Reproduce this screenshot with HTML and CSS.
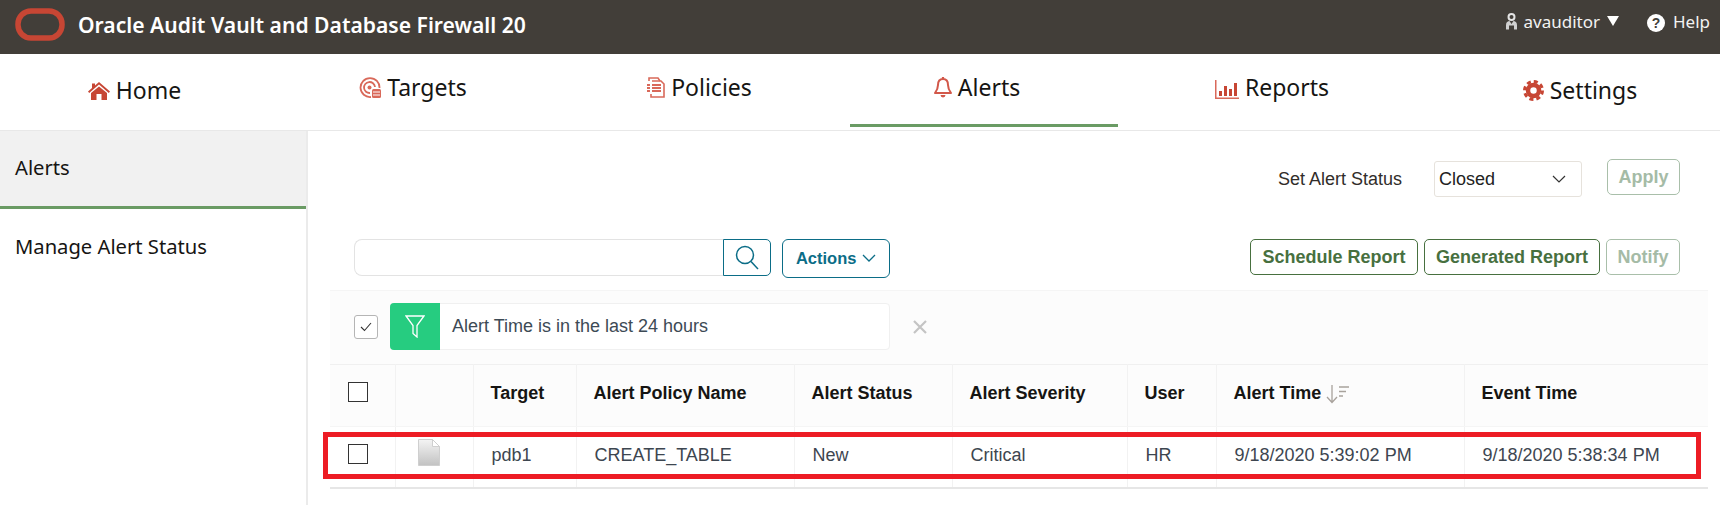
FILE: index.html
```html
<!DOCTYPE html>
<html lang="en">
<head>
  <meta charset="UTF-8">
  <title>Alerts - Oracle Audit Vault and Database Firewall</title>
  <link rel="stylesheet" href="styles.css">
</head>
<body>

  <header class="topbar">
    <svg class="logo" width="50" height="33" viewBox="0 0 50 33">
      <rect x="3" y="3" width="44" height="27" rx="13" fill="none" stroke="#c74634" stroke-width="5.5"/>
    </svg>
    <div class="product">Oracle Audit Vault and Database Firewall 20</div>
    <div class="user">
      <svg width="13" height="17" viewBox="0 0 13 17">
        <circle cx="6.5" cy="4" r="3" fill="none" stroke="#e4e4e4" stroke-width="2"/>
        <path d="M1 16.500v-4.500c0-3 2-4 3.500-4l2 3 2-3c1.500 0 3.500 1 3.500 4v4.500h-3v-4h-5v4z" fill="#d0d0d0"/>
      </svg>
      <span>avauditor</span>
      <span class="caret"></span>
    </div>
    <div class="help">
      <span class="help-icon">?</span>
      <span>Help</span>
    </div>
  </header>

  <nav class="tabs">
    <a class="tab tab-home low">
      <svg width="22" height="18" viewBox="0 0 22 18" fill="#c74634">
        <path d="M11 0 L22 9.5 L20.8 11 L11 2.6 L1.2 11 L0 9.5 L4 6 V1.5 H7 V3.4z"/>
        <path d="M11 4.4 L19 11 V18 H13.5 V12 H8.5 V18 H3 V11z"/>
      </svg>
      Home
    </a>
    <a class="tab tab-targets">
      <svg width="22" height="21" viewBox="0 0 22 21" fill="none" stroke="#d9695a" stroke-width="1.8">
        <path d="M12 20a9.5 9.5 0 1 1 8.5-9"/>
        <path d="M11 16a5.5 5.5 0 1 1 5-6"/>
        <circle cx="10.5" cy="10.5" r="2" fill="#d9695a" stroke="none"/>
        <rect x="13" y="12" width="9" height="9" rx="1.5" fill="#d9695a" stroke="none"/>
        <path d="M14 15h7M14 18h7" stroke="#fff" stroke-width="1"/>
      </svg>
      Targets
    </a>
    <a class="tab tab-policies">
      <svg width="18" height="21" viewBox="0 0 18 21" fill="none" stroke="#d9695a" stroke-width="1.6">
        <path d="M2 4V1h9l2 3"/>
        <path d="M5 4h9l3 3v13H4v-3"/>
        <path d="M0 8h3M0 11h3M0 14h3M5 8h9M5 11h9M5 14h9" stroke-width="1.8"/>
      </svg>
      Policies
    </a>
    <a class="tab tab-alerts active">
      <svg width="18" height="21" viewBox="0 0 18 21" fill="none" stroke="#d2584a" stroke-width="2">
        <path d="M9 2c-3.5 0-5 2.6-5 6 0 4-1.5 6-3 8h16c-1.5-2-3-4-3-8 0-3.400-1.500-6-5-6z" stroke-linejoin="round"/>
        <path d="M9 0v2" stroke-width="2.2"/>
        <path d="M6.5 18a2.5 2.5 0 0 0 5 0z" fill="#d2584a" stroke="none"/>
      </svg>
      Alerts
    </a>
    <a class="tab tab-reports">
      <svg width="24" height="19" viewBox="0 0 24 19" fill="#c74634">
        <path d="M0 0h1.5v17.5H24V19H0z" fill="#d9695a"/>
        <rect x="4" y="11" width="3" height="5"/>
        <rect x="9" y="6" width="3" height="10"/>
        <rect x="14" y="9" width="3" height="7"/>
        <rect x="19" y="3" width="3" height="13"/>
      </svg>
      Reports
    </a>
    <a class="tab tab-settings low">
      <svg width="21" height="21" viewBox="0 0 21 21">
        <circle cx="10.5" cy="10.5" r="5.5" fill="none" stroke="#c74634" stroke-width="4.5"/>
        <circle cx="10.5" cy="10.5" r="9" fill="none" stroke="#c74634" stroke-width="3" stroke-dasharray="4.07 3"/>
      </svg>
      Settings
    </a>
  </nav>

  <div class="layout">
    <aside class="sidebar">
      <a class="side-item active">Alerts</a>
      <a class="side-item">Manage Alert Status</a>
    </aside>

    <main class="content">
      <div class="status-row">
        <label class="status-label">Set Alert Status</label>
        <div class="select">
          Closed
          <svg width="14" height="8" viewBox="0 0 14 8" fill="none" stroke="#333" stroke-width="1.2">
            <path d="M1 1l6 6 6-6"/>
          </svg>
        </div>
        <button class="btn btn-disabled btn-apply">Apply</button>
      </div>

      <div class="toolbar">
        <input class="search-input" type="text">
        <button class="search-btn">
          <svg width="24" height="25" viewBox="0 0 24 25" fill="none" stroke="#0b6d87" stroke-width="1.5">
            <circle cx="10" cy="10" r="8.5"/>
            <path d="M16 16.5l7 7.5"/>
          </svg>
        </button>
        <button class="actions-btn">
          Actions
          <svg width="14" height="8" viewBox="0 0 14 8" fill="none" stroke="#0b6d87" stroke-width="1.3">
            <path d="M1 1l6 6 6-6"/>
          </svg>
        </button>
        <div class="toolbar-right">
          <button class="btn btn-schedule">Schedule Report</button>
          <button class="btn btn-generated">Generated Report</button>
          <button class="btn btn-disabled btn-notify">Notify</button>
        </div>
      </div>

      <div class="report">
        <div class="filters">
          <span class="filter-check">
            <svg width="12" height="10" viewBox="0 0 12 10" fill="none" stroke="#333" stroke-width="1.1">
              <path d="M1 5l3.5 3.5L11 1"/>
            </svg>
          </span>
          <div class="filter-chip">
            <span class="filter-icon">
              <svg width="20" height="23" viewBox="0 0 20 23" fill="none" stroke="#fff" stroke-width="1.3">
                <path d="M1 1h18l-7 9.5V22l-4-3.5v-8z"/>
              </svg>
            </span>
            <span class="filter-text">Alert Time is in the last 24 hours</span>
          </div>
          <svg class="filter-remove" width="14" height="14" viewBox="0 0 14 14" stroke="#c4c4c4" stroke-width="2.2">
            <path d="M1 1l12 12M13 1L1 13"/>
          </svg>
        </div>

        <table class="alerts-table">
          <colgroup>
            <col class="c-check">
            <col class="c-icon">
            <col class="c-target">
            <col class="c-policy">
            <col class="c-status">
            <col class="c-severity">
            <col class="c-user">
            <col class="c-alert-time">
            <col class="c-event-time">
          </colgroup>
          <thead>
            <tr>
              <th><span class="box"></span></th>
              <th></th>
              <th>Target</th>
              <th>Alert Policy Name</th>
              <th>Alert Status</th>
              <th>Alert Severity</th>
              <th>User</th>
              <th>
                Alert Time
                <svg class="sort" width="24" height="20" viewBox="0 0 24 20" fill="none" stroke="#a8a29c" stroke-width="1.3">
                  <path d="M6 1v17M1 13l5 5.5 5-5.5"/>
                  <path d="M13 3h10M13 7.5h7M13 12h4"/>
                </svg>
              </th>
              <th>Event Time</th>
            </tr>
          </thead>
          <tbody>
            <tr>
              <td><span class="box"></span></td>
              <td>
                <svg class="file" width="22" height="27" viewBox="0 0 22 27">
                  <defs>
                    <linearGradient id="fileFill" x1="0" y1="0" x2="0" y2="1">
                      <stop offset="0" stop-color="#f4f4f4"/>
                      <stop offset="1" stop-color="#c2c2c2"/>
                    </linearGradient>
                  </defs>
                  <path d="M.5.5h14l7 7v19H.5z" fill="url(#fileFill)" stroke="#cfcfcf"/>
                  <path d="M14.5.5v7h7z" fill="#fff" stroke="#cfcfcf"/>
                </svg>
              </td>
              <td>pdb1</td>
              <td>CREATE_TABLE</td>
              <td>New</td>
              <td>Critical</td>
              <td>HR</td>
              <td>9/18/2020 5:39:02 PM</td>
              <td>9/18/2020 5:38:34 PM</td>
            </tr>
          </tbody>
        </table>
        <div class="row-highlight"></div>
      </div>
    </main>
  </div>

</body>
</html>
```

FILE: styles.css
```css
* {
  box-sizing: border-box;
}

body {
  margin: 0;
  min-height: 100vh;
  display: flex;
  flex-direction: column;
  background: white;
  font-family: "Liberation Sans", Arial, sans-serif;
  color: #161513;
  overflow: hidden;
}

/* top bar */
.topbar {
  height: 54px;
  background: #423e39;
  color: white;
  display: flex;
  align-items: flex-start;
  font-family: "Noto Sans", sans-serif;
}

.logo {
  margin: 8px 0 0 15px;
}

.product {
  margin: 11px 0 0 13px;
  font-size: 21.1px;
  line-height: 28px;
  font-weight: 600;
}

.user {
  margin: 9px 0 0 auto;
  display: flex;
  align-items: center;
  height: 24px;
  font-size: 17px;
  gap: 5px;
  color: #f2f2f2;
}

.caret {
  margin-left: 2px;
  border-left: 6.5px solid transparent;
  border-right: 6.5px solid transparent;
  border-top: 10px solid white;
}

.help {
  margin: 9px 10px 0 28px;
  display: flex;
  align-items: center;
  height: 24px;
  font-size: 17px;
  gap: 8px;
  color: #f2f2f2;
}

.help-icon {
  width: 18px;
  height: 18px;
  margin-top: 3px;
  border-radius: 50%;
  background: white;
  color: #423e39;
  font: bold 14px/18px "Liberation Sans", sans-serif;
  text-align: center;
}

/* main nav */
.tabs {
  height: 77px;
  display: grid;
  grid-template-columns: 269px 288px 285px 8px 268px 308px 294px;
  border-bottom: 1px solid #e8e8e8;
  font-family: "Noto Sans", sans-serif;
  font-size: 23px;
}

.tab {
  display: flex;
  justify-content: center;
  align-items: flex-start;
  gap: 6px;
  padding-top: 18px;
  height: 73px;
  line-height: 31px;
  white-space: nowrap;
}

.tab svg {
  margin-top: 5px;
}

.tab.low {
  padding-top: 21px;
}

.tab-home svg {
  margin-top: 7px;
}

.tab-alerts {
  grid-column: 5;
  padding-right: 14px;
  border-bottom: 3px solid #6a9b64;
}

.tab-reports svg {
  margin-top: 8px;
}

.tab-settings {
  padding-left: 14px;
}

/* page body */
.layout {
  flex: 1;
  display: flex;
}

.sidebar {
  width: 308px;
  flex-shrink: 0;
  border-right: 2px solid #ebebeb;
  font-family: "Noto Sans", sans-serif;
  font-size: 20.2px;
}

.side-item {
  display: block;
  padding: 0 15px;
  height: 78px;
  line-height: 72px;
}

.side-item.active {
  background: #f1f1f1;
  border-bottom: 3px solid #6a9b64;
}

.side-item + .side-item {
  height: 76px;
  line-height: 74px;
}

.content {
  flex: 1;
  padding-top: 28px;
  min-width: 0;
}

.status-row {
  display: flex;
  justify-content: flex-end;
  align-items: flex-start;
  padding-right: 40px;
  height: 80px;
}

.status-label {
  margin: 10px 32px 0 0;
  font-size: 18px;
  line-height: 20px;
  color: #312d2a;
}

.select {
  width: 148px;
  height: 36px;
  margin: 2px 25px 0 0;
  padding: 0 15px 0 4px;
  display: flex;
  justify-content: space-between;
  align-items: center;
  border: 1px solid #e6e2dc;
  border-radius: 3px;
  font-size: 18px;
  color: #222;
}

.btn {
  height: 36px;
  background: white;
  border: 1px solid #47703f;
  border-radius: 5px;
  padding: 0;
  color: #47703f;
  font: bold 18px "Liberation Sans", Arial, sans-serif;
  white-space: nowrap;
}

.btn-disabled {
  border-color: #a9bfaa;
  color: #a5bba6;
}

.btn-apply {
  width: 73px;
}

.btn-schedule {
  width: 168px;
}

.btn-generated {
  width: 176px;
}

.btn-notify {
  width: 74px;
}

.toolbar {
  display: flex;
  align-items: flex-start;
  height: 51px;
  padding: 0 40px 0 46px;
}

.search-input {
  width: 369px;
  height: 37px;
  border: 1px solid #e3e3e3;
  border-right: none;
  border-radius: 8px 0 0 8px;
}

.search-btn {
  width: 48px;
  height: 37px;
  padding: 3px 0 0;
  background: white;
  border: 1px solid #0b6d87;
  border-radius: 0 5px 5px 0;
}

.actions-btn {
  width: 108px;
  height: 39px;
  margin-left: 11px;
  padding: 0;
  background: white;
  border: 1px solid #0b6d87;
  border-radius: 6px;
  color: #0b6d87;
  font: bold 16.5px "Liberation Sans", Arial, sans-serif;
}

.actions-btn svg {
  margin-left: 1px;
  vertical-align: 2px;
}

.toolbar-right {
  margin-left: auto;
  display: flex;
  gap: 6px;
}

/* report region */
.report {
  position: relative;
  margin: 0 12px 0 22px;
  border-bottom: 2px solid #e6e6e6;
}

.filters {
  height: 74px;
  padding: 12px 0 0 24px;
  display: flex;
  align-items: flex-start;
  background: #fcfcfc;
  border-top: 1px solid #f5f5f5;
}

.filter-check {
  width: 24px;
  height: 24px;
  margin: 12px 12px 0 0;
  display: flex;
  justify-content: center;
  align-items: center;
  background: white;
  border: 1px solid #b5b5b5;
  border-radius: 3px;
}

.filter-chip {
  width: 500px;
  height: 47px;
  display: flex;
  align-items: center;
  background: white;
  border: 1px solid #f0f0f0;
  border-radius: 4px;
}

.filter-icon {
  width: 50px;
  height: 47px;
  margin: -1px 0 -1px -1px;
  display: flex;
  justify-content: center;
  align-items: center;
  background: #26cc80;
  border-radius: 4px 0 0 4px;
}

.filter-text {
  margin-left: 12px;
  font-size: 18px;
  color: #3d4a55;
}

.filter-remove {
  margin: 17px 0 0 23px;
}

.alerts-table {
  width: 1378px;
  table-layout: fixed;
  border-collapse: collapse;
}

.c-check { width: 65px; }
.c-icon { width: 78px; }
.c-target { width: 103px; }
.c-policy { width: 218px; }
.c-status { width: 158px; }
.c-severity { width: 175px; }
.c-user { width: 89px; }
.c-alert-time { width: 248px; }
.c-event-time { width: 244px; }

.alerts-table th,
.alerts-table td {
  padding: 0 0 0 17px;
  border-right: 1px solid #f2f2f2;
  text-align: left;
  white-space: nowrap;
}

.alerts-table th:last-child,
.alerts-table td:last-child {
  border-right: none;
}

.alerts-table th {
  height: 62px;
  padding-bottom: 4px;
  background: #fcfcfc;
  border-top: 1px solid #f0f0f0;
  border-bottom: 1px solid #f5f5f5;
  font-size: 18px;
  font-weight: bold;
}

.alerts-table td {
  height: 60px;
  padding-bottom: 2px;
  padding-left: 18px;
  font-size: 18px;
  color: #3d4650;
}

.alerts-table .box {
  margin: -2px 0 2px 1px;
}

.alerts-table td:first-child {
  padding-left: 17px;
}

.box {
  display: block;
  width: 20px;
  height: 20px;
  border: 1px solid #333;
  background: white;
}

.sort {
  margin-left: 0;
  vertical-align: -5px;
}

.file {
  display: block;
  margin: -6px 0 0 4px;
}

/* annotation drawn over the row */
.row-highlight {
  position: absolute;
  left: -7px;
  right: 7px;
  bottom: 8px;
  height: 47px;
  border: 5px solid #ed1c24;
}
```
